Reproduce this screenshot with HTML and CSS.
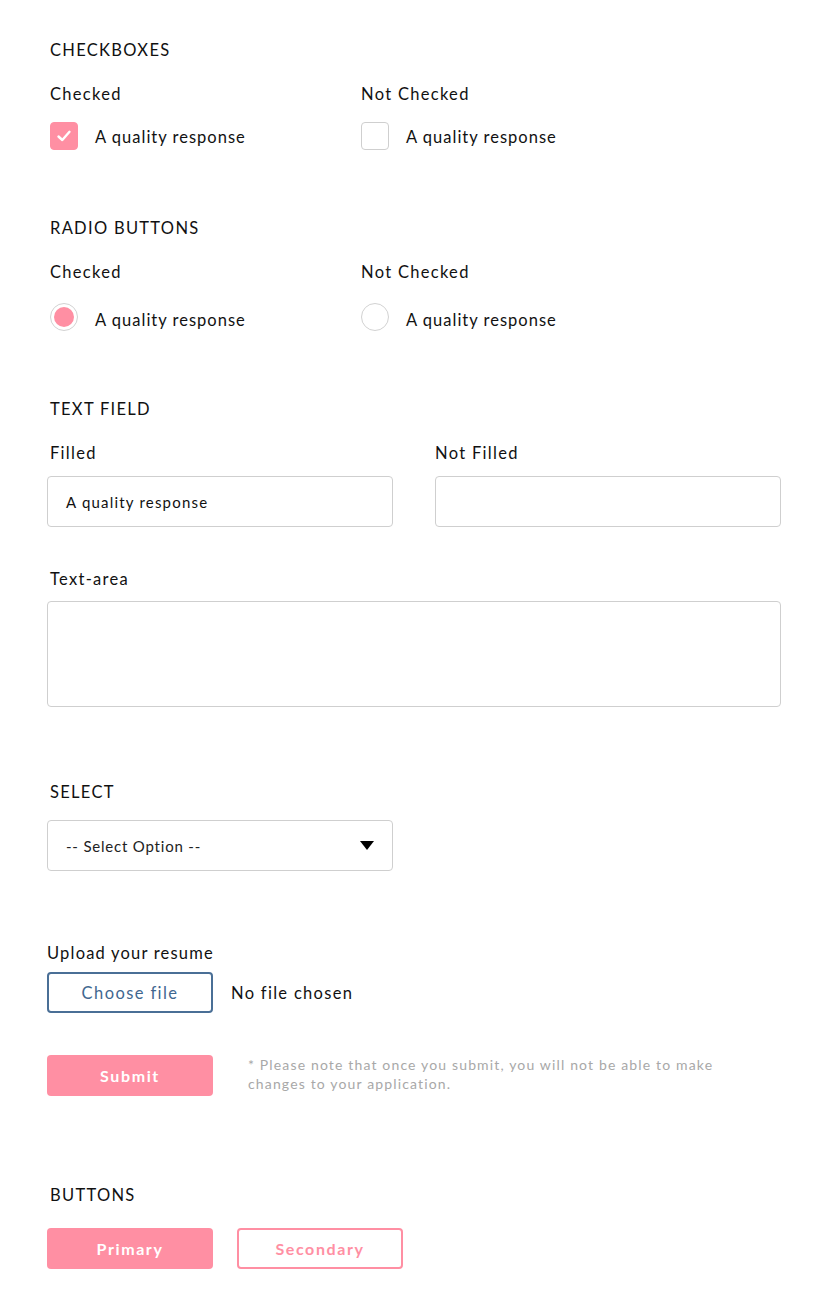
FILE: index.html
```html
<!DOCTYPE html>
<html>
<head>
<meta charset="utf-8">
<link rel="stylesheet" href="styles.css">
</head>
<body>
<div class="page">
  <section class="sec sec-check">
    <h2 class="heading">CHECKBOXES</h2>
    <div class="two-col">
      <div class="col">
        <div class="label">Checked</div>
        <div class="choice">
          <span class="box box-on">
            <svg width="16" height="14" viewBox="0 0 16 14"><path d="M2.5 7.5 L6.3 11 L13.5 2.8" fill="none" stroke="#fff" stroke-width="2.4" stroke-linecap="round" stroke-linejoin="round"/></svg>
          </span>
          <span class="choice-text">A quality response</span>
        </div>
      </div>
      <div class="col">
        <div class="label">Not Checked</div>
        <div class="choice">
          <span class="box"></span>
          <span class="choice-text">A quality response</span>
        </div>
      </div>
    </div>
  </section>

  <section class="sec sec-radio">
    <h2 class="heading">RADIO BUTTONS</h2>
    <div class="two-col">
      <div class="col">
        <div class="label">Checked</div>
        <div class="choice choice-radio">
          <span class="radio"><span class="dot"></span></span>
          <span class="choice-text">A quality response</span>
        </div>
      </div>
      <div class="col">
        <div class="label">Not Checked</div>
        <div class="choice choice-radio">
          <span class="radio"></span>
          <span class="choice-text">A quality response</span>
        </div>
      </div>
    </div>
  </section>

  <section class="sec sec-text">
    <h2 class="heading">TEXT FIELD</h2>
    <div class="field-grid">
      <div class="field">
        <div class="label">Filled</div>
        <div class="input">A quality response</div>
      </div>
      <div class="field">
        <div class="label label-flush">Not Filled</div>
        <div class="input"></div>
      </div>
    </div>
    <div class="label label-ta">Text-area</div>
    <div class="textarea"></div>
  </section>

  <section class="sec sec-select">
    <h2 class="heading">SELECT</h2>
    <div class="select">
      <span>-- Select Option --</span>
      <svg width="14" height="9" viewBox="0 0 14 9"><path d="M0 0 H14 L7 9 Z" fill="#000"/></svg>
    </div>
  </section>

  <section class="sec sec-upload">
    <div class="upload-label">Upload your resume</div>
    <div class="upload-row">
      <span class="btn-file">Choose file</span>
      <span class="file-status">No file chosen</span>
    </div>
    <div class="submit-row">
      <span class="btn btn-primary">Submit</span>
      <p class="note">* Please note that once you submit, you will not be able to make changes to your application.</p>
    </div>
  </section>

  <section class="sec sec-buttons">
    <h2 class="heading">BUTTONS</h2>
    <div class="btn-row">
      <span class="btn btn-primary">Primary</span>
      <span class="btn btn-secondary">Secondary</span>
    </div>
  </section>
</div>
</body>
</html>
```

FILE: styles.css
```css
* { box-sizing: border-box; }
html, body { margin: 0; padding: 0; background: #fff; }
body {
  font-family: "Lato", "Noto Sans", sans-serif;
  color: #111;
  font-size: 16.5px;
  letter-spacing: 1px;
}
.page {
  width: 818px;
  padding: 37px 37px 40px 47px;
}
.heading {
  margin: 0 0 0 3px;
  padding-top: 2px;
  font-size: 16.5px;
  font-weight: 400;
  line-height: 22px;
  letter-spacing: 1.3px;
}
.label {
  padding-top: 2px;
  line-height: 22px;
  margin-left: 3px;
  letter-spacing: 1.3px;
}
.label-flush { margin-left: 0; }
.two-col {
  display: grid;
  grid-template-columns: 311px 311px;
  margin-top: 20px;
}
.choice {
  display: flex;
  align-items: center;
  margin-top: 17px;
  margin-left: 3px;
  height: 28px;
}
.choice-radio { margin-top: 20px; }
.choice-text { margin-left: 17px; line-height: 22px; position: relative; top: 1px; }
.choice-radio .choice-text { top: 3px; }
.box {
  width: 28px; height: 28px;
  border: 1px solid #cfcfcf;
  border-radius: 4px;
  display: flex; align-items: center; justify-content: center;
}
.box-on { background: #ff8fa3; border-color: #ff8fa3; }
.radio {
  width: 28px; height: 28px;
  border: 1px solid #d2d2d2;
  border-radius: 50%;
  display: flex; align-items: center; justify-content: center;
}
.dot { width: 20px; height: 20px; border-radius: 50%; background: #ff8fa3; }

.sec-radio { margin-top: 65px; }
.sec-text { margin-top: 65px; }
.field-grid {
  display: grid;
  grid-template-columns: 346px 346px;
  column-gap: 42px;
  margin-top: 20px;
}
.input {
  margin-top: 12px;
  height: 51px;
  border: 1px solid #cfcfcf;
  border-radius: 4px;
  padding: 1px 18px 0;
  display: flex; align-items: center;
  font-size: 15px;
  letter-spacing: 1.2px;
}
.label-ta { margin-top: 39px; }
.textarea {
  margin-top: 11px;
  width: 734px;
  height: 106px;
  border: 1px solid #cfcfcf;
  border-radius: 4px;
}
.sec-select { margin-top: 72px; }
.select {
  margin-top: 17px;
  width: 346px;
  height: 51px;
  border: 1px solid #cfcfcf;
  border-radius: 4px;
  padding: 0 18px 0 18px;
  display: flex; align-items: center; justify-content: space-between;
  font-size: 15px;
  letter-spacing: 0.8px;
  color: #222;
}
.sec-upload { margin-top: 70px; }
.upload-label { padding-top: 1px; line-height: 22px; letter-spacing: 1.2px; }
.upload-row {
  display: flex; align-items: center;
  margin-top: 8px;
}
.btn-file {
  width: 166px; height: 41px;
  border: 2px solid #4a6f96;
  border-radius: 4px;
  color: #3f6790;
  letter-spacing: 1.4px;
  display: flex; align-items: center; justify-content: center;
}
.file-status { margin-left: 18px; letter-spacing: 1.3px; }
.submit-row {
  display: flex; align-items: flex-start;
  margin-top: 42px;
}
.btn {
  width: 166px; height: 41px;
  border-radius: 4px;
  display: flex; align-items: center; justify-content: center;
  font-weight: 700;
  font-size: 16px;
  letter-spacing: 1.6px;
}
.btn-primary { background: #ff8fa3; color: #fff; }
.btn-secondary { border: 2px solid #ff8fa3; color: #ff8fa3; margin-left: 24px; width: 166px; }
.note {
  margin: 0 0 0 35px;
  width: 475px;
  font-size: 14px;
  line-height: 19px;
  color: #a8a8a8;
  letter-spacing: 1.15px;
}
.sec-buttons { margin-top: 86px; }
.btn-row { display: flex; margin-top: 22px; }
```
